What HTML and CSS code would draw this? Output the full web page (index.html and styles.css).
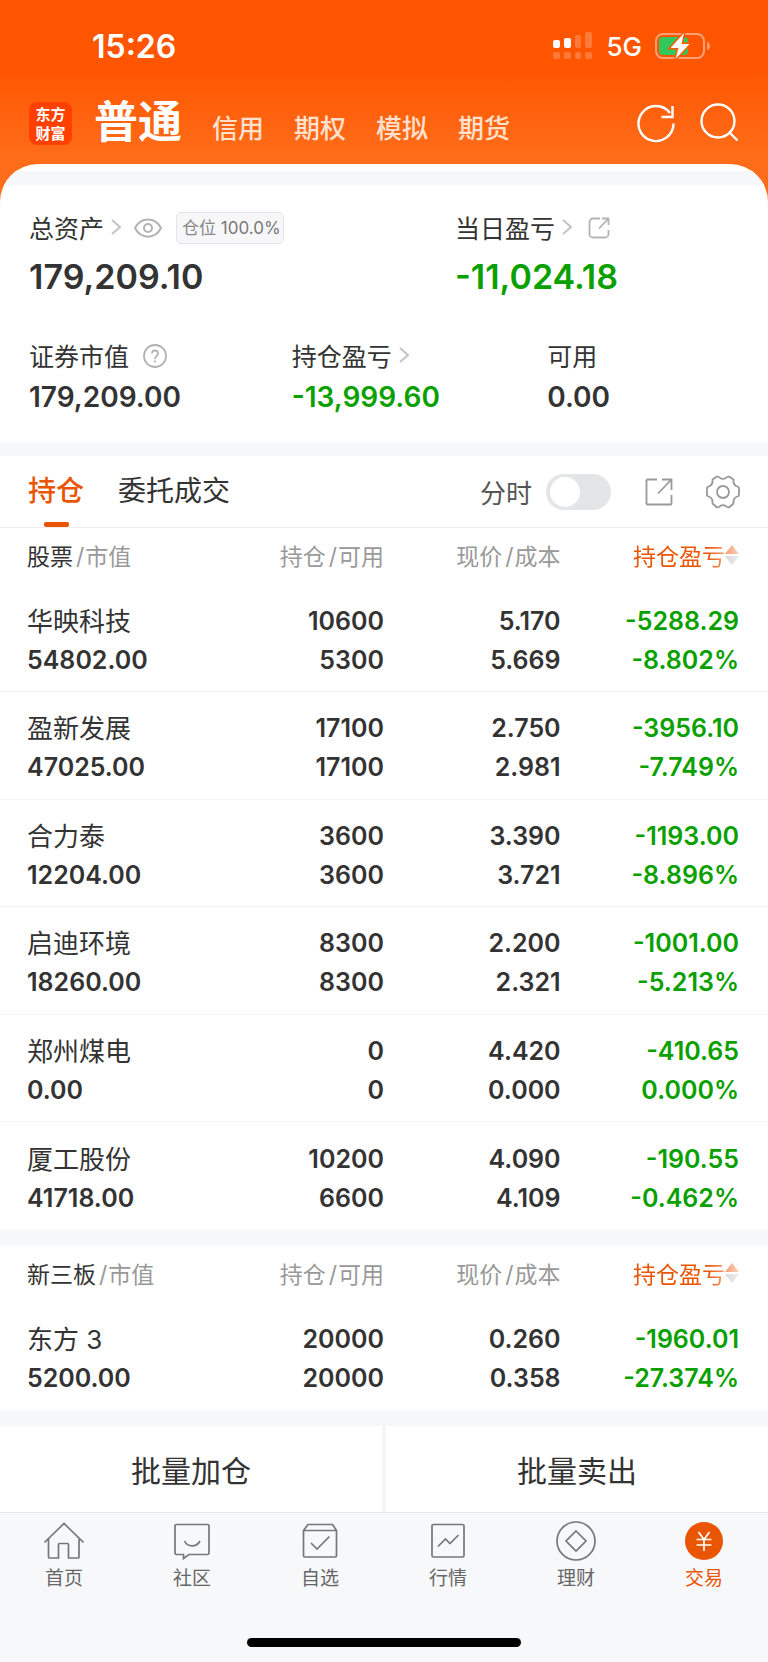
FILE: index.html
```html
<!DOCTYPE html>
<html lang="zh-CN">
<head>
  <meta charset="UTF-8">
  <meta name="viewport" content="width=device-width, initial-scale=1.0">
  <title>交易 - 普通</title>
  <link rel="stylesheet" href="styles.css">
</head>
<body>
  <header class="top">
    <div class="status-bar">
      <span class="time">15:26</span>
      <div class="status-icons">
        <svg width="40" height="28" viewBox="0 0 40 28" fill="#fff">
          <rect x="0" y="8" width="7" height="8" rx="2"/>
          <rect x="11" y="6" width="7" height="10" rx="2"/>
          <g opacity="0.22">
            <rect x="22" y="3" width="6" height="13" rx="2"/>
            <rect x="32" y="0" width="7" height="16" rx="2"/>
            <rect x="0" y="20" width="7" height="7" rx="2"/>
            <rect x="11" y="20" width="7" height="7" rx="2"/>
            <rect x="22" y="20" width="6" height="7" rx="2"/>
            <rect x="32" y="20" width="7" height="7" rx="2"/>
          </g>
        </svg>
        <span class="network">5G</span>
        <svg width="56" height="28" viewBox="0 0 56 28">
          <rect x="1" y="2" width="48" height="24" rx="7" fill="none" stroke="#fff" stroke-opacity="0.45" stroke-width="2"/>
          <path d="M52 10c4 1 4 7 0 8z" fill="#fff" fill-opacity="0.45"/>
          <rect x="4" y="5" width="29" height="18" rx="4" fill="#34c759"/>
          <path d="M29 1 15.500 16h8L20.500 27 34.500 12h-8z" fill="#fff" stroke="#ff5a05" stroke-width="3" paint-order="stroke"/>
        </svg>
      </div>
    </div>
    <div class="account-bar">
      <div class="logo"><span>东方</span><span>财富</span></div>
      <nav class="accounts">
        <a href="#" class="current">普通</a>
        <a href="#">信用</a>
        <a href="#">期权</a>
        <a href="#">模拟</a>
        <a href="#">期货</a>
      </nav>
      <button type="button" class="icon-btn" aria-label="刷新">
        <svg width="40" height="40" viewBox="0 0 40 40" fill="none" stroke="#fff" stroke-width="2.400">
          <path d="M37.500 20.500A17.500 17.500 0 1 1 34 10"/>
          <path d="M36.500 3v11H25.500"/>
        </svg>
      </button>
      <button type="button" class="icon-btn" aria-label="搜索">
        <svg width="40" height="40" viewBox="0 0 40 40" fill="none" stroke="#fff" stroke-width="2.400">
          <circle cx="18" cy="18" r="16.500"/>
          <path d="M29.500 29.500 37.500 37.500"/>
        </svg>
      </button>
    </div>
  </header>

  <main class="panel">
    <section class="summary">
      <div class="row row-main">
        <div class="item">
          <div class="label">
            <a href="#">总资产<svg class="arrow" width="10" height="16" viewBox="0 0 10 16"><path d="M1 1l8 7-8 7"/></svg></a>
            <button type="button" class="icon-btn eye" aria-label="隐藏资产">
              <svg width="28" height="20" viewBox="0 0 28 20" fill="none" stroke="#b3b3b3" stroke-width="2">
                <path d="M1 10C7-1.500 21-1.500 27 10 21 21.500 7 21.500 1 10z"/>
                <circle cx="14" cy="10" r="4"/>
              </svg>
            </button>
            <span class="tag">仓位 <b>100.0%</b></span>
          </div>
          <div class="amount big">179,209.10</div>
        </div>
        <div class="item">
          <div class="label">
            <a href="#">当日盈亏<svg class="arrow" width="10" height="16" viewBox="0 0 10 16"><path d="M1 1l8 7-8 7"/></svg></a>
            <button type="button" class="icon-btn share" aria-label="分享">
              <svg width="22" height="22" viewBox="0 0 22 22" fill="none" stroke="#b3b3b3" stroke-width="1.800">
                <path d="M12 1.500H5A3.500 3.500 0 0 0 1.500 5v12A3.500 3.500 0 0 0 5 20.500h12a3.500 3.500 0 0 0 3.500-3.500v-4"/>
                <path d="M14 1.500h6.500V8M20 2l-9 9.500"/>
              </svg>
            </button>
          </div>
          <div class="amount big down">-11,024.18</div>
        </div>
      </div>
      <div class="row row-sub">
        <div class="item">
          <div class="label">
            <span>证券市值</span>
            <button type="button" class="icon-btn help" aria-label="说明">
              <svg width="24" height="24" viewBox="0 0 24 24" fill="none" stroke="#b3b3b3" stroke-width="1.800">
                <circle cx="12" cy="12" r="11"/>
                <path d="M9 9.500c0-4 6-4 6 0 0 2.300-3 2.500-3 5.500M12 16.500v2"/>
              </svg>
            </button>
          </div>
          <div class="amount">179,209.00</div>
        </div>
        <div class="item">
          <div class="label">
            <a href="#">持仓盈亏<svg class="arrow" width="10" height="16" viewBox="0 0 10 16"><path d="M1 1l8 7-8 7"/></svg></a>
          </div>
          <div class="amount down">-13,999.60</div>
        </div>
        <div class="item">
          <div class="label">可用</div>
          <div class="amount">0.00</div>
        </div>
      </div>
    </section>

    <section class="holdings">
      <div class="tabs">
        <a href="#" class="tab active">持仓</a>
        <a href="#" class="tab">委托成交</a>
        <label class="switch">分时 <input type="checkbox"></label>
        <button type="button" class="icon-btn export" aria-label="导出">
          <svg width="28" height="28" viewBox="0 0 28 28" fill="none" stroke="#999" stroke-width="1.800">
            <path d="M12 1.500H2.500A1 1 0 0 0 1.500 2.500v23a1 1 0 0 0 1 1h23a1 1 0 0 0 1-1V17"/>
            <path d="M17 1.500h9.500V12M26 2 13 15.500"/>
          </svg>
        </button>
        <button type="button" class="icon-btn" aria-label="设置">
          <svg width="34" height="34" viewBox="0 0 34 34" fill="none" stroke="#999" stroke-width="1.800" stroke-linejoin="round">
            <path d="M11 1.500l2 .5c2 2.500 6 2.500 8 0l2-.5 4.500 3c-.5 4 1 6.500 5 7.500l.5 1v7l-.5 1c-4 1-5.500 4-5 7.500l-4.500 4-2-.5c-2-2.500-6-2.500-8 0l-2 .5-4.500-4c.5-3.500-1-6.500-5-7.500l-.5-1v-7l.5-1c4-1 5.500-3.500 5-7.500z"/>
            <circle cx="17" cy="17" r="6"/>
          </svg>
        </button>
      </div>

      <table>
        <thead>
          <tr>
            <th><em>股票</em><i>/</i>市值</th>
            <th>持仓<i>/</i>可用</th>
            <th>现价<i>/</i>成本</th>
            <th><button type="button" class="sort">持仓盈亏<svg width="14" height="20" viewBox="0 0 14 20"><path d="M7 0l7 9H0z" fill="#ea5504"/><path d="M7 20l7-9H0z" fill="#bbb"/></svg></button></th>
          </tr>
        </thead>
        <tbody>
          <tr>
            <td><span class="name">华映科技</span>54802.00</td>
            <td>10600<br>5300</td>
            <td>5.170<br>5.669</td>
            <td class="down">-5288.29<br>-8.802%</td>
          </tr>
          <tr>
            <td><span class="name">盈新发展</span>47025.00</td>
            <td>17100<br>17100</td>
            <td>2.750<br>2.981</td>
            <td class="down">-3956.10<br>-7.749%</td>
          </tr>
          <tr>
            <td><span class="name">合力泰</span>12204.00</td>
            <td>3600<br>3600</td>
            <td>3.390<br>3.721</td>
            <td class="down">-1193.00<br>-8.896%</td>
          </tr>
          <tr>
            <td><span class="name">启迪环境</span>18260.00</td>
            <td>8300<br>8300</td>
            <td>2.200<br>2.321</td>
            <td class="down">-1001.00<br>-5.213%</td>
          </tr>
          <tr>
            <td><span class="name">郑州煤电</span>0.00</td>
            <td>0<br>0</td>
            <td>4.420<br>0.000</td>
            <td class="down">-410.65<br>0.000%</td>
          </tr>
          <tr>
            <td><span class="name">厦工股份</span>41718.00</td>
            <td>10200<br>6600</td>
            <td>4.090<br>4.109</td>
            <td class="down">-190.55<br>-0.462%</td>
          </tr>
        </tbody>
      </table>
    </section>

    <section class="holdings">
      <table>
        <thead>
          <tr>
            <th><em>新三板</em><i>/</i>市值</th>
            <th>持仓<i>/</i>可用</th>
            <th>现价<i>/</i>成本</th>
            <th><button type="button" class="sort">持仓盈亏<svg width="14" height="20" viewBox="0 0 14 20"><path d="M7 0l7 9H0z" fill="#ea5504"/><path d="M7 20l7-9H0z" fill="#bbb"/></svg></button></th>
          </tr>
        </thead>
        <tbody>
          <tr>
            <td><span class="name">东方 3</span>5200.00</td>
            <td>20000<br>20000</td>
            <td>0.260<br>0.358</td>
            <td class="down">-1960.01<br>-27.374%</td>
          </tr>
        </tbody>
      </table>
    </section>

    <div class="batch">
      <button type="button">批量加仓</button>
      <button type="button">批量卖出</button>
    </div>
  </main>

  <nav class="tabbar">
    <a href="#">
      <svg viewBox="0 0 40 40"><path d="M.500 21.500 20 2.500l19.500 19M4.500 18v18a1 1 0 0 0 1 1h9V23.500a1 1 0 0 1 1-1h8a1 1 0 0 1 1 1V37h9.500a1 1 0 0 0 1-1V18"/></svg>
      首页
    </a>
    <a href="#">
      <svg viewBox="0 0 40 40"><path d="M4.500 3.500h31a1.500 1.500 0 0 1 1.500 1.500v27a1.500 1.500 0 0 1-1.500 1.500H17L11.500 37.500V33.500h-7A1.500 1.500 0 0 1 3 32V5A1.500 1.500 0 0 1 4.500 3.500zM12.500 20c3 6.500 12 6.500 15.500 0"/></svg>
      社区
    </a>
    <a href="#">
      <svg viewBox="0 0 40 40"><path d="M3.500 9.500 8 3.500h24.500l4 6v25a1.500 1.500 0 0 1-1.500 1.500H5a1.500 1.500 0 0 1-1.500-1.500zM3.500 9.500h33M11 22l6 6 12.500-12.500"/></svg>
      自选
    </a>
    <a href="#">
      <svg viewBox="0 0 40 40"><rect x="4" y="3.500" width="32" height="32.500" rx="1.500"/><path d="M10 25.500l7.500-7.500 4.500 4.500 8.500-8.500"/></svg>
      行情
    </a>
    <a href="#">
      <svg viewBox="0 0 40 40"><circle cx="20" cy="20" r="19"/><path d="M20 10 30 20 20 30 10 20z"/></svg>
      理财
    </a>
    <a href="#" class="active">
      <svg viewBox="0 0 40 40"><circle class="coin" cx="20" cy="20" r="19"/><path class="yen" d="M14.500 11 20 18.500 25.500 11M12.500 18.500h15M12.500 24h15M20 18.500V30"/></svg>
      交易
    </a>
  </nav>
  <div class="home-indicator"><span></span></div>
</body>
</html>
```
FILE: styles.css
```css
* {
  box-sizing: border-box;
}

body {
  margin: 0;
  font-family: Inter, "Noto Sans CJK SC", sans-serif;
  color: #333;
  background: #f7f8fa;
}

a {
  color: inherit;
  text-decoration: none;
}

button {
  font-family: inherit;
  color: inherit;
  background: none;
  border: none;
  padding: 0;
  cursor: pointer;
}

svg {
  display: block;
}

.icon-btn {
  flex: none;
}

/* header */
.top {
  padding-bottom: 40px;
  color: #fff;
  background: linear-gradient(#ff5500 66px, #ff6d1a 158px);
}

.status-bar {
  display: flex;
  justify-content: space-between;
  align-items: center;
  height: 92px;
  padding: 0 57px 0 92px;
}

.time {
  font-size: 32px;
  font-weight: 600;
}

.status-icons {
  display: flex;
  align-items: center;
  gap: 13px;
}

.network {
  font-size: 26px;
  font-weight: 500;
}

.account-bar {
  display: flex;
  align-items: center;
  gap: 24px;
  height: 72px;
  padding: 0 28px 10px 29px;
}

.logo {
  display: flex;
  flex-direction: column;
  align-items: center;
  justify-content: center;
  width: 43px;
  height: 43px;
  border-radius: 8px;
  background: #ff4000;
  font-family: "Noto Sans CJK SC", sans-serif;
  font-size: 15px;
  font-weight: 700;
  line-height: 19px;
}

.accounts {
  display: flex;
  align-items: baseline;
  flex: 1;
  gap: 30px;
  margin-left: -2px;
  padding-top: 5px;
  font-size: 26px;
  font-weight: 500;
  line-height: 56px;
  color: #ffe0cf;
}

.accounts .current {
  font-size: 44px;
  font-weight: 700;
  color: #fff;
}

/* asset summary */
.panel {
  margin-top: -40px;
  padding-top: 7px;
  border-radius: 38px 38px 0 0;
  background: #fff;
  overflow: hidden;
}

.summary {
  padding: 24px 29px 23px;
  border-top: 14px solid #f6f7f9;
}

.row {
  display: grid;
}

.row-main {
  grid-template-columns: 60% 40%;
}

.row-sub {
  grid-template-columns: 37% 36% 27%;
  margin-top: 30px;
}

.label {
  display: flex;
  align-items: center;
  height: 38px;
  padding-bottom: 2px;
  font-size: 25px;
}

.label a {
  display: flex;
  align-items: center;
}

.label .icon-btn,
.tag {
  margin-top: 2px;
}

.arrow {
  margin-left: 7px;
  fill: none;
  stroke: #c4c4c4;
  stroke-width: 2;
}

.eye {
  margin-left: 13px;
}

.share {
  margin-left: 16px;
}

.help {
  margin-left: 14px;
}

.tag {
  margin-left: 14px;
  padding: 0 2px 0 5px;
  border: 1px solid #e4e4e7;
  border-radius: 5px;
  background: #f7f7f9;
  font-size: 17px;
  line-height: 30px;
  white-space: nowrap;
  color: #888;
}

.tag b {
  font-weight: 400;
  color: #777;
}

.amount {
  font-size: 28px;
  font-weight: 600;
  line-height: 44px;
}

.amount.big {
  font-size: 34px;
  line-height: 60px;
}

.down {
  color: #0aa000;
}

/* holdings */
.holdings {
  border-top: 14px solid #f6f7f9;
}

.holdings + .holdings {
  border-top-width: 16px;
}

.tabs {
  display: flex;
  align-items: center;
  height: 72px;
  padding: 0 28px;
  border-bottom: 1px solid #efefef;
  font-size: 28px;
}

.tab {
  position: relative;
  line-height: 71px;
  margin-right: 34px;
}

.tab.active {
  font-weight: 500;
  color: #ea5504;
}

.tab.active::after {
  content: "";
  position: absolute;
  left: 50%;
  bottom: 0;
  width: 25px;
  height: 5px;
  margin-left: -12px;
  border-radius: 2px;
  background: #ea5504;
}

.switch {
  display: flex;
  align-items: center;
  gap: 14px;
  margin-left: auto;
  font-size: 26px;
  color: #555;
}

.switch input {
  appearance: none;
  width: 65px;
  height: 36px;
  margin: 0;
  padding: 3px 4px;
  border-radius: 18px;
  background: #e4e5e7;
}

.switch input::before {
  content: "";
  display: block;
  width: 30px;
  height: 30px;
  border-radius: 50%;
  background: #fff;
}

.switch input:checked {
  padding-left: 31px;
  background: #ea5504;
}

.export {
  margin: 0 33px 0 34px;
}

table {
  width: 100%;
  table-layout: fixed;
  border-collapse: separate;
  border-spacing: 0;
}

th, td {
  padding: 0;
  text-align: right;
}

th:first-child, td:first-child {
  width: 30%;
  padding-left: 27px;
  text-align: left;
}

th:nth-child(2) {
  width: 20%;
}

th:nth-child(3) {
  width: 23%;
}

th:last-child, td:last-child {
  width: 27%;
  padding-right: 29px;
}

th {
  height: 57px;
  padding-bottom: 4px;
  font-size: 23px;
  font-weight: 400;
  color: #999;
}

th em {
  font-style: normal;
  color: #333;
}

th i {
  margin: 0 1px 0 3px;
  font-style: normal;
}

.sort {
  display: inline-flex;
  align-items: center;
  font-size: 23px;
  color: #ea5504;
  -webkit-mask-image: linear-gradient(to right, #000 70%, transparent 110%);
  mask-image: linear-gradient(to right, #000 70%, transparent 110%);
}

td {
  height: 107px;
  padding-top: 5px;
  border-bottom: 1px solid #f3f3f3;
  font-size: 25px;
  font-weight: 600;
  line-height: 39px;
}

tr:nth-child(even) td {
  height: 108px;
}

tr:last-child td {
  border-bottom: none;
}

.name {
  display: block;
  font-size: 26px;
  font-weight: 400;
}

/* batch actions */
.batch {
  display: grid;
  grid-template-columns: 1fr 1fr;
  gap: 4px;
  border-top: 16px solid #f6f7f9;
  background: #f6f7f9;
}

.batch button {
  height: 86px;
  background: #fff;
  font-size: 30px;
}

/* bottom navigation */
.tabbar {
  display: flex;
  border-top: 1px solid #e8e8ea;
  padding: 8px 0;
}

.tabbar a {
  display: flex;
  flex: 1;
  flex-direction: column;
  align-items: center;
  gap: 4px;
  font-size: 19px;
  line-height: 28px;
  color: #666;
}

.tabbar svg {
  width: 40px;
  height: 40px;
  fill: none;
  stroke: #777;
  stroke-width: 1.7;
}

.tabbar .active {
  color: #ea5504;
}

.tabbar .coin {
  fill: #ea5504;
  stroke: none;
}

.tabbar .yen {
  stroke: #fff;
}

.home-indicator {
  display: flex;
  justify-content: center;
  padding: 37px 0 15px;
}

.home-indicator span {
  width: 274px;
  height: 9px;
  border-radius: 5px;
  background: #000;
}
```
